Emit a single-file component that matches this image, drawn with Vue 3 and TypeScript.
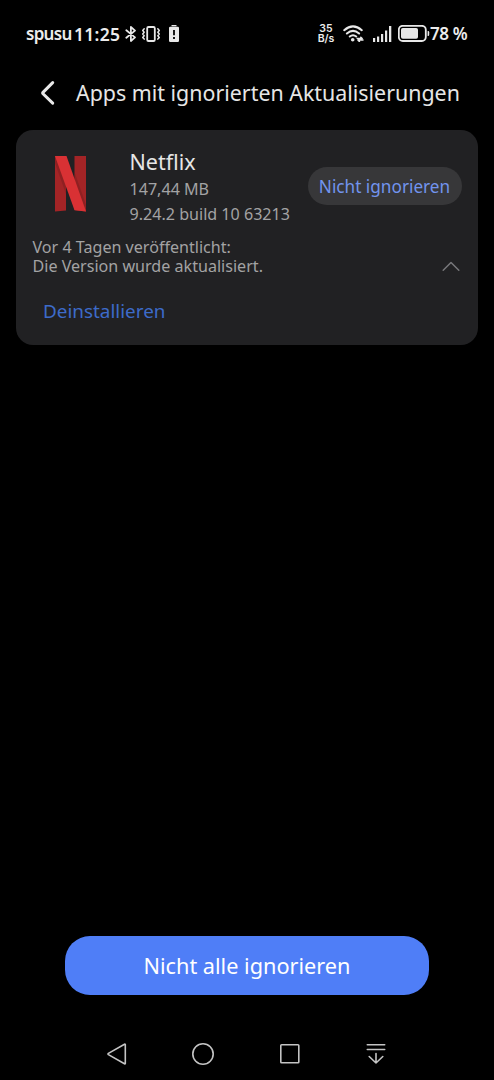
<script setup lang="ts">
import { ref } from 'vue'

interface AppUpdate {
  name: string
  size: string
  version: string
  released: string
  notes: string
}

const app: AppUpdate = {
  name: 'Netflix',
  size: '147,44 MB',
  version: '9.24.2 build 10 63213',
  released: 'Vor 4 Tagen veröffentlicht:',
  notes: 'Die Version wurde aktualisiert.',
}
const expanded = ref(true)
</script>

<template>
  <div class="screen">
    <div class="status">
      <span class="carrier">spusu</span>
      <span class="clock">11:25</span>
      <svg class="bt" width="12" height="16" viewBox="0 0 12 16">
        <path d="M1.300 4.300 10 11.400 5.900 15V1l4.100 3.600-8.700 7.100" />
      </svg>
      <svg class="vib" width="20" height="16" viewBox="0 0 20 16">
        <rect x="6.200" y="1" width="7.600" height="14" rx="1.300" />
        <path class="thin" d="M3.200 2.800 1.700 4.500 3.200 6.200 1.700 8 3.200 9.700 1.700 11.400 3.200 13.100M16.800 2.800l1.500 1.700-1.500 1.700L18.300 8l-1.500 1.700 1.500 1.700-1.500 1.700" />
      </svg>
      <svg class="lowbat" width="10" height="17" viewBox="0 0 10 17">
        <path class="solid" d="M2.500 0h5v1.300h-5zM1.200 1.800h7.600Q10 1.800 10 3v12.800Q10 17 8.800 17H1.200Q0 17 0 15.800V3Q0 1.800 1.200 1.800z" />
        <path class="hole" d="M4.100 5h1.800v5.300H4.100zM4.100 12h1.800v1.900H4.100z" />
      </svg>
      <span class="gap"></span>
      <span class="rate"><span>35</span><span>B/s</span></span>
      <svg class="wifi" width="21" height="17" viewBox="0 0 21 17">
        <path d="M1.200 5.200Q10 -2.400 18.800 5.200M3.900 8.500Q10 3.200 16.100 8.500M6.800 11.500Q10 8.900 13.200 11.500" />
        <circle class="solid" cx="9.700" cy="14.700" r="1.800" />
        <path class="thin" d="M14.200 13.600h5l-1.400-1.300M20 15.100h-5l1.400 1.300" />
      </svg>
      <svg class="signal" width="19" height="16" viewBox="0 0 19 16">
        <path class="solid" d="M0 12h2.200v4H0zM4 10.500h2.200V16H4zM8 8h2.200v8H8zM12 4.500h2.200V16H12zM16 0h2.300v16H16z" />
      </svg>
      <svg class="battery" width="32" height="17" viewBox="0 0 32 17">
        <rect x=".8" y=".8" width="27" height="15.200" rx="4" />
        <rect class="solid" x="3" y="3" width="17" height="10.800" rx="1.800" />
        <path class="solid" d="M29.600 6h.5q1.100 0 1.100 1.200v2.500q0 1.200-1.100 1.200h-.5z" />
      </svg>
      <span class="percent">78 %</span>
    </div>

    <header class="header">
      <svg class="back" width="16" height="26" viewBox="0 0 16 26">
        <path d="M12.700 2.600 3 12.400q-.7.700 0 1.400l9.700 9.400" />
      </svg>
      <h1>Apps mit ignorierten Aktualisierungen</h1>
    </header>

    <section class="card">
      <div class="top">
        <svg class="logo" width="32" height="56" viewBox="0 0 32 56">
          <path fill="#a32426" d="M0 0h11v54.500L0 55.500zM19.500 0H31v55.500l-11.500-1.500z" />
          <path fill="#7c1c1e" d="M0 0 11 28v10L0 7zM31 49 19.500 16v10L31 55.500z" opacity=".5" />
          <path fill="#d93134" d="M0 0h11.500L31 55.500 19.500 54.300z" />
        </svg>
        <div class="info">
          <div class="name">{{ app.name }}</div>
          <div class="meta size">{{ app.size }}</div>
          <div class="meta version">{{ app.version }}</div>
        </div>
        <button class="pill"><span>Nicht ignorieren</span></button>
      </div>
      <div class="details">
        <div class="notes">
          <div class="released">{{ app.released }}</div>
          <div class="changes">{{ app.notes }}</div>
        </div>
        <svg class="chevron" width="18" height="11" viewBox="0 0 18 11" @click="expanded = !expanded">
          <path d="M1.200 9.300 9 1.500l7.800 7.800" />
        </svg>
      </div>
      <a v-if="expanded" class="uninstall">Deinstallieren</a>
    </section>

    <button class="primary"><span>Nicht alle ignorieren</span></button>

    <nav class="nav">
      <svg width="24" height="24" viewBox="0 0 24 24"><path d="M20.300 2.600v18.800q0 .8-.8.400L3.400 12.600q-.8-.6 0-1.200L19.500 2.200q.8-.4.8.4z" /></svg>
      <svg width="24" height="24" viewBox="0 0 24 24"><circle cx="12" cy="12" r="10.200" /></svg>
      <svg width="24" height="24" viewBox="0 0 24 24"><rect x="2.800" y="2.800" width="18" height="18" rx=".8" /></svg>
      <svg width="24" height="24" viewBox="0 0 24 24"><path d="M3.300 2.700h17.400M3.300 7.500h17.400M12 11.500v9.500M5.200 14.500 12 21l6.800-6.500" /></svg>
    </nav>
  </div>
</template>

<style>
body {
  background: #000;
}
</style>

<style scoped>
.screen {
  box-sizing: border-box;
  width: 494px;
  height: 1080px;
  display: flex;
  flex-direction: column;
  background: #000;
  color: #e6e6e6;
  font-family: "Noto Sans", sans-serif;
  white-space: nowrap;
  overflow: hidden;
}
svg {
  display: block;
  flex: none;
  fill: none;
  stroke: #e8e8e8;
  stroke-linejoin: round;
  stroke-linecap: round;
}
.solid {
  fill: #e8e8e8;
  stroke: none;
}
.status .hole {
  fill: #000;
  stroke: none;
}
.status {
  height: 67px;
  display: flex;
  align-items: center;
  padding: 0 27px 0 26px;
  font-size: 17px;
  font-weight: 600;
  color: #ececec;
}
.carrier {
  width: 48px;
  letter-spacing: -.7px;
}
.clock {
  width: 51px;
  font-size: 17.500px;
  letter-spacing: .3px;
}
.status svg {
  stroke-width: 1.800;
}
.status .thin {
  stroke-width: 1.500;
}
.vib {
  margin-left: 4px;
}
.lowbat {
  margin-left: 8px;
}
.gap {
  flex: 1;
}
.rate {
  display: flex;
  flex-direction: column;
  align-items: center;
  width: 18px;
  font-family: Inter, sans-serif;
  font-size: 10.500px;
  line-height: 9.500px;
}
.wifi {
  margin-left: 8px;
}
.status .wifi {
  stroke-width: 2;
}
.signal {
  margin-left: 9px;
}
.battery {
  margin-left: 6px;
}
.percent {
  width: 37px;
  letter-spacing: -.4px;
}
.header {
  height: 52px;
  display: flex;
  align-items: center;
  padding-left: 40px;
}
.back {
  stroke-width: 3;
}
h1 {
  margin: -2px 0 0 20px;
  font-size: 21.400px;
  font-weight: 400;
}
.card {
  box-sizing: border-box;
  width: 462px;
  height: 215px;
  margin: 11px 16px 0;
  border-radius: 17px;
  background: #212123;
}
.top {
  height: 108px;
  display: flex;
  align-items: flex-start;
  padding: 0 16px 0 38.500px;
}
.logo {
  margin-top: 26px;
  stroke: none;
}
.info {
  width: 178px;
  margin: 18px 0 0 43px;
}
.name {
  font-size: 21.500px;
  line-height: 28px;
  margin-bottom: 1px;
}
.meta {
  font-size: 16.100px;
  line-height: 25px;
  color: #a3a3a4;
}
button {
  display: flex;
  align-items: center;
  justify-content: center;
  border: 0;
  padding: 0;
  font-family: inherit;
}
.pill {
  flex: none;
  width: 154px;
  height: 38px;
  margin: 37px 0 0;
  border-radius: 19px;
  background: #373739;
  color: #7294ee;
  font-size: 17.200px;
}
.details {
  display: flex;
  align-items: flex-start;
  justify-content: space-between;
  padding: 0 18px 0 16.500px;
}
.notes {
  font-size: 16.100px;
  line-height: 19px;
  color: #a3a3a4;
}
.chevron {
  margin-top: 23px;
  stroke: #77777a;
  stroke-width: 1.500;
}
.uninstall {
  display: block;
  margin: 21px 0 0 27px;
  font-size: 18.900px;
  line-height: 28px;
  color: #3d6bc9;
}
.primary {
  width: 364px;
  height: 59px;
  margin: auto auto 0;
  border-radius: 25px;
  background: #4f7ef7;
  color: #fff;
  font-size: 21.700px;
}
.nav {
  height: 24px;
  display: flex;
  justify-content: space-between;
  margin: 47px 106px 14px 105px;
}
.nav svg {
  stroke: #c4c4c4;
  stroke-width: 1.600;
}
</style>
